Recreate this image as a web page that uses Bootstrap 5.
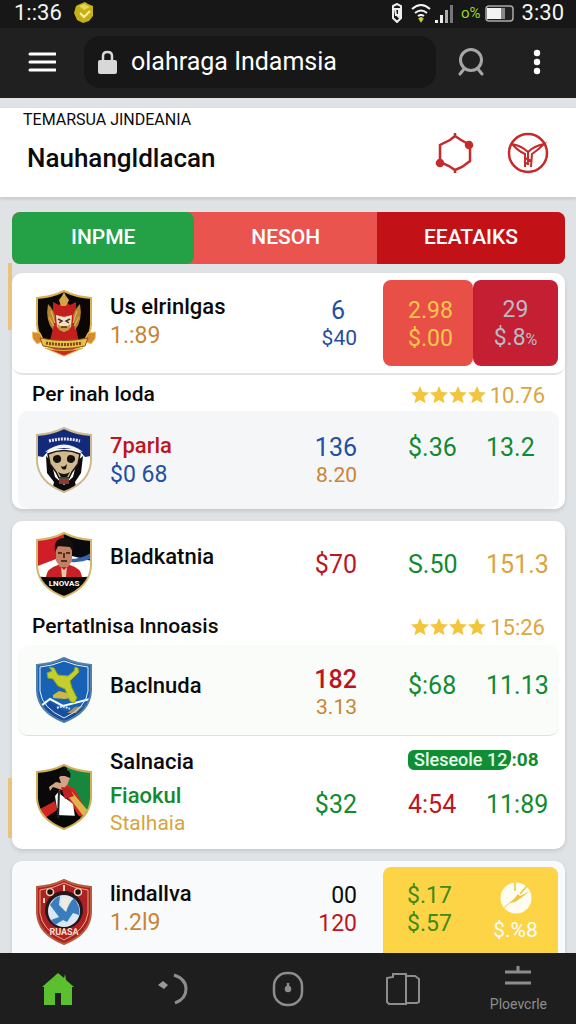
<!DOCTYPE html>
<html lang="id">
<head>
<meta charset="utf-8">
<meta name="viewport" content="width=device-width, initial-scale=1">
<title>olahraga Indamsia</title>
<link href="https://cdn.jsdelivr.net/npm/bootstrap@5.3.0/dist/css/bootstrap.min.css" rel="stylesheet">
<style>
  body { font-family: Roboto, "Liberation Sans", sans-serif; background: #e0e3e6; color: #0b0b0b; }
  svg { display: block; flex: none; }
  button { font-family: inherit; }
  .plain-btn { border: 0; background: none; padding: 0; color: inherit; flex: none; }

  .status-strip { height: 28px; background: #171717; color: #f4f4f4; font-size: 22px; line-height: 26px; padding: 0 12px 2px 14px; }
  .status-pct { font-size: 15px; color: #9bd420; }
  .browser-bar { height: 70px; background: #202020; padding: 0 30px 2px 28px; }
  .address-box { background: #171717; border-radius: 16px; height: 52px; padding: 0 14px; gap: 14px; margin: 0 22px 0 28px; min-width: 0; }
  .address-box input { background: none; border: 0; outline: 0; color: #fff; font-size: 25px; min-width: 0; width: 0; padding: 0; }
  .account-btn { margin-right: 44px; }

  .page-head { background: #fff; height: 90px; margin-top: 10px; border-bottom: 1px solid #cfd1d5; box-shadow: 0 1px 3px #0002; padding: 0 27px 0 23px; }
  .kicker { font-size: 16px; line-height: 24px; }
  .page-head h1 { font-size: 26px; line-height: 32px; font-weight: 500; margin: 10px 0 0 4px; }

  .scroll-area { min-height: 0; padding: 14px 11px 0 12px; scrollbar-width: none; }
  .scroll-area::-webkit-scrollbar { display: none; }

  .tab-strip { display: grid; grid-template-columns: 33fr 33fr 34fr; height: 52px; border-radius: 8px; overflow: hidden; background: #e9544e; flex: none; margin-bottom: 9px; }
  .tab-strip button { border: 0; color: #fff; font-size: 21px; font-weight: 500; padding: 0; }
  .tab-strip .tab-a { background: #24a047; border-radius: 8px; }
  .tab-strip .tab-b { background: #e9544e; }
  .tab-strip .tab-c { background: #c21217; }

  .panel { position: relative; background: #fff; border-radius: 10px; box-shadow: 0 2px 4px #0000001f; flex: none; margin-bottom: 12px; }
  .panel.marked::before { content: ""; position: absolute; left: -4px; width: 4px; background: #e9c27e; }
  .panel-one::before { top: -10px; height: 67px; }
  .panel-two::before { bottom: 11px; height: 60px; }
  .panel.cool { background: #f9fafc; }

  .team-row { display: grid; grid-template-columns: 78px 1fr 60px 26px 90px 85px; align-items: center; padding: 0 7px 0 20px; }
  .inset { margin: 0 6px; padding: 0 1px 0 14px; border-radius: 10px; background: #f5f6f8; }
  .inset.pale { background: #fafcf9; border-bottom: 1px solid #dedfdf; }
  .divided { border-bottom: 2px solid #e3e4e6; border-radius: 10px; }
  .h-first { height: 102px; }
  .h-inset { height: 98px; }
  .h-short { height: 88px; }
  .h-pale { height: 91px; }
  .h-tall { height: 113px; }

  .t-name { font-size: 22px; line-height: 30px; font-weight: 500; white-space: nowrap; }
  .t-sub { font-size: 23px; line-height: 28px; white-space: nowrap; }
  .t-note { font-size: 21px; line-height: 24px; white-space: nowrap; }
  .t-num { font-size: 25px; line-height: 30px; white-space: nowrap; }
  .col-mid { grid-column: 3; text-align: right; }
  .col-odd { grid-column: 5; padding-left: 25px; }
  .col-end { grid-column: 6; padding-left: 13px; }
  .row-one { grid-row: 1; }
  .tile { height: 86px; border-radius: 8px; display: flex; flex-direction: column; justify-content: center; padding-top: 4px; }
  .tile-a { background: #e84f47; color: #fcc84a; }
  .tile-b { background: #c41f33; color: #b7bcc7; align-items: center; padding-left: 0; }
  .tile-gold { grid-column: 5 / 7; background: #fed447; height: 96px; border-radius: 8px; display: grid; grid-template-columns: 90px 85px; padding-bottom: 10px; }

  .league { height: 36px; padding: 0 20px; font-size: 21px; font-weight: 500; }
  .stars { color: #f3c53c; }
  .league time { font-size: 22px; font-weight: 400; color: #dba63f; }
  .live-line { grid-column: 5 / 7; padding-left: 25px; height: 32px; }
  .live-tag { background: #108e35; color: #e8fbe9; font-size: 18px; line-height: 20px; font-weight: 500; border-radius: 6px 4px 12px 6px; padding: 0 4px 0 6px; }
  .live-rest { font-size: 19px; line-height: 20px; font-weight: 700; }

  .c-blue { color: #234fa0; } .c-green { color: #118a30; } .c-red { color: #bd1622; }
  .c-gold { color: #d9a440; } .c-tan { color: #c98435; } .c-moss { color: #3e8a12; }

  .dock { height: 71px; background: #1e1e1e; color: #8d8d8d; flex: none; }
  .dock a { color: inherit; text-decoration: none; flex: 1 1 0; }
  .dock-label { font-size: 14px; line-height: 18px; }
</style>
</head>
<body>
<svg width="0" height="0" class="position-absolute" aria-hidden="true">
  <symbol id="star" viewBox="0 0 18 18"><path fill="currentColor" d="M9 0l2.600 6 6.400.6-4.900 4.300 1.500 6.400L9 13.900l-5.600 3.400 1.500-6.400L0 6.600 6.400 6z"/></symbol>
  <symbol id="four" viewBox="0 0 75 18">
    <use href="#star" width="18" height="18"/><use href="#star" x="19" width="18" height="18"/><use href="#star" x="38" width="18" height="18"/><use href="#star" x="57" width="18" height="18"/>
  </symbol>
  <clipPath id="crest"><path d="M32 3Q44 9 59 10V36Q58 57 32 67Q6 57 5 36V10Q20 9 32 3z"/></clipPath>
  <symbol id="rim" viewBox="0 0 64 70"><path d="M32 3Q44 9 59 10V36Q58 57 32 67Q6 57 5 36V10Q20 9 32 3z" fill="none" stroke="currentColor" stroke-width="2"/></symbol>
</svg>

<div class="vh-100 d-flex flex-column overflow-hidden">
  <div class="status-strip d-flex align-items-center justify-content-between flex-shrink-0">
    <div class="d-flex align-items-center gap-2">
      <span>1::36</span>
      <svg class="ms-1" width="20" height="22" viewBox="0 0 20 22"><path d="M6 2L11 0l3 2 5 2v10l-4 5-6 2-6-3-3-7 2-7z" fill="#c4b019"/><path d="M5 4l5-2 6 3-6 3z" fill="#e8d659"/><path d="M6 11l4 4 6-6" fill="none" stroke="#fff0a0" stroke-width="2"/></svg>
    </div>
    <div class="d-flex align-items-center gap-1">
      <svg width="12" height="20" viewBox="0 0 12 20" fill="none" stroke="#eee" stroke-width="2"><path d="M2 3l4-2 4 2v12l-4 4-4-4zM4 6h4v6H5zM6 12l4 4"/></svg>
      <svg class="ms-1" width="20" height="20" viewBox="0 0 20 20" fill="none" stroke="#f4f4f4" stroke-width="2"><path d="M1 6Q10-2 19 6M4 10q6-5 12 0M7 13q3-2 6 0"/><path d="M10 14v4M8 15l2 3 2-3" stroke="#c9cf35"/></svg>
      <svg width="18" height="19" viewBox="0 0 18 19"><path d="M0 16h3v3H0zM5 11h3v8H5z" fill="#eee"/><path d="M10 6h3v13h-3z" fill="#aaa"/><path d="M15 1h3v18h-3z" fill="#777"/></svg>
      <span class="status-pct ms-1">o%</span>
      <svg width="29" height="17" viewBox="0 0 29 17"><rect x="1" y="1" width="27" height="15" rx="3" fill="#222" stroke="#aaa" stroke-width="1.500"/><path d="M2 3h14v11H2z" fill="#f4f4f4"/><path d="M16 3h4v11h-4z" fill="#888"/></svg>
      <span class="ms-1">3:30</span>
    </div>
  </div>

  <nav class="browser-bar d-flex align-items-center flex-shrink-0">
    <button class="plain-btn" aria-label="Menu"><svg width="28" height="20" viewBox="0 0 28 20" stroke="#fff" stroke-width="3" stroke-linecap="round"><path d="M2 2h25M2 10h25M2 18h25"/></svg></button>
    <div class="address-box d-flex align-items-center flex-grow-1">
      <svg width="19" height="24" viewBox="0 0 19 24"><path d="M5 11V6q0-4 4.500-4T14 6v5" fill="none" stroke="#d8d8d8" stroke-width="2.500"/><rect y="10" width="19" height="14" rx="2" fill="#d8d8d8"/></svg>
      <input class="flex-grow-1" type="text" aria-label="Alamat" value="olahraga Indamsia">
    </div>
    <button class="plain-btn account-btn" aria-label="Akun"><svg width="26" height="28" viewBox="0 0 26 28" fill="none" stroke="#a6a6a6" stroke-width="3" stroke-linecap="round"><circle cx="13" cy="12" r="10.500"/><path d="M6 21l-4 5M20 21l4 5"/></svg></button>
    <button class="plain-btn" aria-label="Lainnya"><svg width="18" height="26" viewBox="0 0 18 26" fill="#fff"><circle cx="9" cy="4" r="3.200"/><circle cx="9" cy="13" r="3.200"/><circle cx="9" cy="22" r="3.200"/></svg></button>
  </nav>

  <header class="page-head d-flex justify-content-between flex-shrink-0">
    <div>
      <div class="kicker">TEMARSUA JINDEANIA</div>
      <h1>Nauhangldlacan</h1>
    </div>
    <div class="d-flex align-items-center gap-4">
      <button class="plain-btn me-2" aria-label="Jaringan"><svg width="40" height="42" viewBox="0 0 38 42" fill="none" stroke="#c62a2c" stroke-width="2.500"><path d="M19 1v4M19 37v4M19 4l-5 4-10 5v17l9 4 6 4 7-3 8-6V13l-9-5z"/><circle cx="33" cy="13" r="3" fill="#c62a2c"/><circle cx="4" cy="31" r="3" fill="#c62a2c"/></svg></button>
      <button class="plain-btn" aria-label="Liga"><svg width="42" height="42" viewBox="0 0 42 42" fill="none" stroke="#c62a2c" stroke-width="2.500"><circle cx="21" cy="21" r="19"/><path d="M5 12q10 2 16 8 6-6 16-8-6 6-12 10l-1 13M5 12q6 7 13 10v13M21 20v13M18 26l5 2-4 4" stroke-width="2"/></svg></button>
    </div>
  </header>

  <main class="scroll-area flex-grow-1 overflow-auto d-flex flex-column">
    <div class="tab-strip" role="tablist">
      <button class="tab-a" role="tab" aria-selected="true">INPME</button>
      <button class="tab-b" role="tab" aria-selected="false">NESOH</button>
      <button class="tab-c" role="tab" aria-selected="false">EEATAIKS</button>
    </div>

    <section class="panel panel-one marked">
      <div class="team-row h-first divided">
        <svg width="64" height="70" viewBox="0 0 64 70">
          <g clip-path="url(#crest)"><path fill="#0b0705" d="M0 0h64v70H0z"/><path fill="#c51f1d" d="M21 14l6 3 5-5 6 5 6-3v26l5 25H15l6-25z"/></g>
          <use href="#rim" color="#d9b04e" width="64" height="70"/>
          <path d="M16 16q5 5 7 12l-2 14q-8-10-5-26zM48 16q-5 5-7 12l2 14q8-10 5-26z" fill="#b98531"/>
          <path d="M19 23l4 12M45 23l-4 12M17 29l5 9M47 29l-5 9" stroke="#e7bc5e"/>
          <path d="M30 8l2-4 2 4 3 4-3 6h-5l-2-6z" fill="#d3a643"/>
          <path d="M24 27l8 2 8-2-1 12-7 5-7-5z" fill="#efe3c8"/><path d="M25 36q7 5 14 0l-2 6-5 2-5-2z" fill="#c9983f"/><path d="M26 31l4 2-3 2M38 31l-4 2 3 2M29 39h6" stroke="#60251b" stroke-width="1.500" fill="none"/>
          <path d="M0 44l8 1 4 8-7 3-4-5zM64 44l-8 1-4 8 7 3 4-5z" fill="#d98a2e" stroke="#f0c964"/>
          <path d="M8 50q24 5 48 0l-3 8q-21 5-42 0z" fill="#eac249" stroke="#8b541c"/><path d="M14 55q18 3 36 0" fill="none" stroke="#7a4715" stroke-width="3" stroke-dasharray="2 1"/>
          <path d="M13 60q19 5 38 0L32 68z" fill="#c92a1e" stroke="#e9b64a"/>
        </svg>
        <div class="pb-1"><div class="t-name">Us elrinlgas</div><div class="t-sub c-tan">1.:89</div></div>
        <div class="col-mid c-blue"><div class="t-num pe-2 me-1">6</div><div class="t-note">$40</div></div>
        <div class="col-odd tile tile-a"><div class="t-sub">2.98</div><div class="t-sub">$.00</div></div>
        <div class="col-end tile tile-b"><div class="t-sub">29</div><div class="t-sub">$.8<small class="fs-6">%</small></div></div>
      </div>
      <div class="league d-flex align-items-center justify-content-between pt-1">
        <span>Per inah loda</span>
        <span class="d-flex align-items-center stars"><svg width="75" height="18"><use href="#four"/></svg><time class="ms-1">10.76</time></span>
      </div>
      <div class="team-row inset h-inset">
        <svg width="64" height="70" viewBox="0 0 64 70">
          <g clip-path="url(#crest)"><path fill="#fff" d="M0 0h64v70H0z"/><path fill="#13297a" d="M0 0h64v30l-11 2-7-8H18l-7 8-11-2z"/><path fill="#0c0c0f" d="M14 31l5 5 4 16 9 8 9-8 4-16 6-5-2 17-6 9 3 13H19l3-13-7-9z"/></g>
          <path d="M13 27q19-15 38 0l-6-1q-13-6-26 0z" fill="#f5f5f8"/>
          <path d="M16 29q16-7 32 0l-2 10-6 8-3 6H27l-3-6-6-8z" fill="#cfb98d" stroke="#191512" stroke-width="1.500"/>
          <path d="M22 31q6-3 7 2t-5 5q-5-3-2-7zM42 31q-6-3-7 2t5 5q5-3 2-7zM29 41q3 2 6-2l-1 5q-4 2-5-3zM26 47q6 4 12 0l-3 5h-6z" fill="#15110f"/>
          <path d="M27 54h10v5H27z" fill="#8d3b32"/>
          <path d="M17 16q15-4 31 0" fill="none" stroke="#e5e7f4" stroke-width="3" stroke-dasharray="2 1"/>
          <use href="#rim" color="#cdb98b" width="64" height="70"/>
        </svg>
        <div><div class="t-name c-red">7parla</div><div class="t-sub c-blue">$0 68</div></div>
        <div class="col-mid"><div class="t-num c-blue">136</div><div class="t-note c-tan">8.20</div></div>
        <div class="col-odd t-num c-green pb-4">$.36</div>
        <div class="col-end t-num c-green pb-4">13.2</div>
      </div>
    </section>

    <section class="panel panel-two marked">
      <div class="team-row h-short">
        <svg width="64" height="70" viewBox="0 0 64 70">
          <g clip-path="url(#crest)"><path fill="#fff" d="M0 0h64v70H0z"/><path fill="#cf1e27" d="M0 0h32v26L0 38z"/><path fill="#090a0e" d="M32 0h32v32L32 24z"/><path d="M38 29q12 0 24-8v6q-10 6-24 5z" fill="#3462b4"/><path fill="#090909" d="M0 46l12 1h40l12-1v24H0z"/></g>
          <path d="M14 47q1-9 12-12h12q11 3 12 12z" fill="#c92027"/>
          <path d="M24 20q0-4 8-5 8 1 8 5v11l-4 6h-8l-4-6z" fill="#c38065"/><path d="M23 22q-2-14 9-14t9 14l-3-5-12-1z" fill="#16100e"/>
          <path d="M26 23h4M34 23h4M29 31h6M32 23v5" stroke="#32150f" stroke-width="1.500"/>
          <path d="M29 37l3 3 3-3-1 10h-4z" fill="#e6c7a2"/>
          <text x="32" y="56" fill="#fff" font-size="8" font-weight="700" text-anchor="middle">LNOVAS</text>
          <use href="#rim" color="#d4b66d" width="64" height="70"/>
        </svg>
        <div class="pb-3"><div class="t-name">Bladkatnia</div></div>
        <div class="col-mid t-num c-red">$70</div>
        <div class="col-odd t-num c-green">S.50</div>
        <div class="col-end t-num c-gold">151.3</div>
      </div>
      <div class="league d-flex align-items-center justify-content-between">
        <span>Pertatlnisa lnnoasis</span>
        <span class="d-flex align-items-center stars"><svg width="75" height="18"><use href="#four"/></svg><time class="ms-1">15:26</time></span>
      </div>
      <div class="team-row inset pale h-pale">
        <svg width="64" height="70" viewBox="0 0 64 70">
          <g clip-path="url(#crest)"><path fill="#1762b4" d="M0 0h64v70H0z"/><path d="M5 54l13-10 13 7 27-7" fill="none" stroke="#fff" stroke-width="2"/><path d="M11 54l21 14 24-16-24 4-14-10z" fill="#174d9b"/></g>
          <path d="M20 16l-3-4 5 1 4 7 10 1 6-5 1-4 3 1 1 4-4 4-5 5 2 7 5 10-3 5-4-2-5-12-7-3-5-7-5-1-1-5z" fill="#c4cf2b" stroke="#8ba426"/>
          <path d="M21 40l6-4 8 2 3 5-5 1-12-1z" fill="#cbb943"/><path d="M25 53q6-3 13 1" stroke="#cfdfff" fill="none" stroke-width="2" stroke-dasharray="2 1"/><path d="M35 58l8-6 8-1-7 7z" fill="#a69464"/>
          <use href="#rim" color="#547fa8" width="64" height="70"/><path d="M32 6Q44 11 56 12V36Q54 53 32 63Q10 53 8 36V12Q20 11 32 6z" fill="none" stroke="#e8efef"/>
        </svg>
        <div class="pb-2"><div class="t-name">Baclnuda</div></div>
        <div class="col-mid pt-1"><div class="t-num c-red fw-medium">182</div><div class="t-note c-tan">3.13</div></div>
        <div class="col-odd t-num c-green pb-2">$:68</div>
        <div class="col-end t-num c-green pb-2">11.13</div>
      </div>
      <div class="team-row h-tall">
        <svg class="mt-2" width="64" height="70" viewBox="0 0 64 70">
          <g clip-path="url(#crest)"><path fill="#090909" d="M0 0h64v70H0z"/><path fill="#16873d" d="M32 0h32v56L32 32z"/><path fill="#d12624" d="M8 47l15-8 2 9-12 8zM31 22l11 4 14 26-8 4-15-24z"/><path fill="#e1b54b" d="M36 34l4-4 17 20-5 5z"/><path fill="#fff" d="M28 32l13 10 2 13-18 2zM23 34l5-6 1 14-4 5z"/><path fill="#080808" d="M14 56l10-3 25 1-8 12H24z"/></g>
          <path d="M27 15l6-3 5 4-3 7-5 5-9-3-3 4-1-4 7-5 5 1z" fill="#d6a184"/><path d="M27 14q-1-6 5-7l-1-4h4v5q5 2 3 8l-5-2z" fill="#101010"/>
          <path d="M29 25l8 1 5 8-9 3z" fill="#bf2020"/><path d="M27 29l-1 27" stroke="#222" stroke-width="2"/>
          <use href="#rim" color="#d2ad58" width="64" height="70"/>
        </svg>
        <div class="pb-1"><div class="t-name mb-1">Salnacia</div><div class="t-name c-green">Fiaokul</div><div class="t-note c-gold">Stalhaia</div></div>
        <div class="col-mid t-num c-green pt-4">$32</div>
        <div class="live-line row-one align-self-start d-flex align-items-center mt-2"><span class="live-tag">Sleseole 12</span><span class="live-rest c-green">:08</span></div>
        <div class="col-odd row-one t-num c-red pt-4">4:54</div>
        <div class="col-end row-one t-num c-green pt-4">11:89</div>
      </div>
    </section>

    <section class="panel cool">
      <div class="team-row h-first">
        <svg width="64" height="70" viewBox="0 0 64 70">
          <g clip-path="url(#crest)"><path fill="#ad2023" d="M0 0h64v70H0z"/></g>
          <circle cx="32" cy="33" r="19" fill="#26171b"/><circle cx="32" cy="34" r="16" fill="#d8e8f4"/>
          <path d="M18 28q5-8 10-9l-1 9 7 7q3-9 8-14 7 9 5 17l-6-2-6 9-4-2-8 5-4-5 8-3z" fill="#397dbf"/><path d="M29 23l5-4 3 3-3 12-4-5z" fill="#f3eada"/>
          <circle cx="18" cy="15" r="3.500" fill="#1b1010" stroke="#eccfae" stroke-width="1.500"/><circle cx="46" cy="15" r="3.500" fill="#1b1010" stroke="#eccfae" stroke-width="1.500"/><path d="M32 8v6M12 21v5" stroke="#f0d4a9" stroke-width="2"/>
          <text x="32" y="58" fill="#f9dfd0" font-size="9" font-weight="700" text-anchor="middle">RUASA</text>
          <use href="#rim" color="#b75a3d" width="64" height="70"/><path d="M32 6Q44 12 56 13V36Q54 53 32 63Q10 53 8 36V13Q20 12 32 6z" fill="none" stroke="#e2ad7f"/>
        </svg>
        <div class="pb-2"><div class="t-name">lindallva</div><div class="t-sub c-tan">1.2l9</div></div>
        <div class="col-mid pb-1"><div class="t-sub">00</div><div class="t-sub c-red">120</div></div>
        <div class="tile-gold align-self-end align-items-center">
          <div class="c-moss ps-4"><div class="t-sub">$.17</div><div class="t-sub">$.57</div></div>
          <div class="text-white d-flex flex-column align-items-center gap-1 pt-1">
            <svg width="32" height="32" viewBox="0 0 32 32"><circle cx="16" cy="16" r="15.500" fill="#fffdf0"/><path d="M4 25l10-8 4-5 2 2 10-5-9 7-6 4-5 1-6 5z" fill="#ecc643"/><path d="M15 0v9M20 12l7-8" stroke="#ecc643" stroke-width="1.500"/></svg>
            <div class="t-note">$.%8</div>
          </div>
        </div>
      </div>
    </section>
  </main>

  <nav class="dock d-flex align-items-center">
    <a href="#" aria-label="Beranda" class="d-flex justify-content-center"><svg width="32" height="32" viewBox="0 0 32 32"><path d="M16 0l6 5 1-4 1 6 8 7h-2v18H19V20h-6v12H2V14H0z" fill="#5bbf30"/></svg></a>
    <a href="#" aria-label="Kembali" class="d-flex justify-content-center"><svg width="30" height="32" viewBox="0 0 30 32"><path d="M0 12l5-4 5 4-4 4z" fill="#9a9a9a"/><path d="M16 2q12 4 12 14T17 30" fill="none" stroke="#8d8d8d" stroke-width="3"/></svg></a>
    <a href="#" aria-label="Waktu" class="d-flex justify-content-center"><svg width="32" height="36" viewBox="0 0 32 36" fill="none" stroke="#8d8d8d" stroke-width="2.500"><rect x="2" y="2" width="28" height="32" rx="13"/><circle cx="16" cy="18" r="2" fill="#8d8d8d"/><path d="M16 12v5"/></svg></a>
    <a href="#" aria-label="Tab" class="d-flex justify-content-center"><svg width="34" height="34" viewBox="0 0 34 34" fill="none" stroke="#8d8d8d" stroke-width="2"><path d="M1 6l6-1V2h13v30H3l-2-2zM20 4h9l4 3v23l-2 1H20"/></svg></a>
    <a href="#" class="d-flex flex-column align-items-center"><svg width="28" height="22" viewBox="0 0 28 22" stroke="#8d8d8d" stroke-width="3"><path d="M1 7h26M1 18h26M14 1v6"/></svg><span class="dock-label mt-2">Ploevcrle</span></a>
  </nav>
</div>
<script src="https://cdn.jsdelivr.net/npm/bootstrap@5.3.0/dist/js/bootstrap.bundle.min.js"></script>
</body>
</html>
